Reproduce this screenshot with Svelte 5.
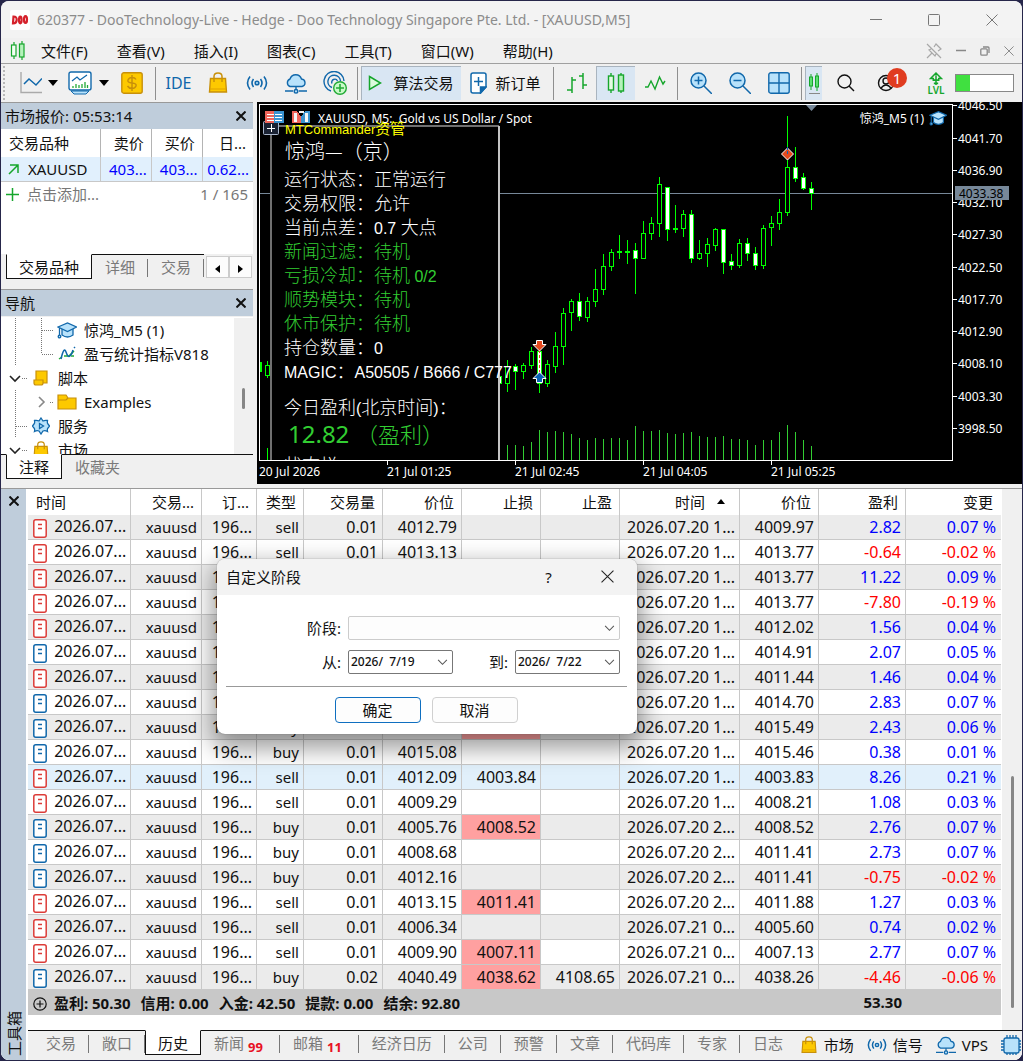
<script>
    const menus = ["文件(F)", "查看(V)", "插入(I)", "图表(C)", "工具(T)", "窗口(W)", "帮助(H)"];

    // type, lots, price, stop loss, take profit, close time, close price, profit, change
    const deals = [
        ["sell", "0.01", "4012.79", "", "", "2026.07.20 1...", "4009.97", "2.82", "0.07 %"],
        ["sell", "0.01", "4013.13", "", "", "2026.07.20 1...", "4013.77", "-0.64", "-0.02 %"],
        ["sell", "0.01", "", "", "", "2026.07.20 1...", "4013.77", "11.22", "0.09 %"],
        ["sell", "0.01", "", "", "", "2026.07.20 1...", "4013.77", "-7.80", "-0.19 %"],
        ["sell", "0.01", "", "", "", "2026.07.20 1...", "4012.02", "1.56", "0.04 %"],
        ["buy", "0.01", "", "", "", "2026.07.20 1...", "4014.91", "2.07", "0.05 %"],
        ["sell", "0.01", "", "", "", "2026.07.20 1...", "4011.44", "1.46", "0.04 %"],
        ["buy", "0.01", "", "", "", "2026.07.20 1...", "4014.70", "2.83", "0.07 %"],
        ["buy", "0.01", "", "4015.49", "", "2026.07.20 1...", "4015.49", "2.43", "0.06 %"],
        ["buy", "0.01", "4015.08", "", "", "2026.07.20 1...", "4015.46", "0.38", "0.01 %"],
        ["sell", "0.01", "4012.09", "4003.84", "", "2026.07.20 1...", "4003.83", "8.26", "0.21 %"],
        ["sell", "0.01", "4009.29", "", "", "2026.07.20 1...", "4008.21", "1.08", "0.03 %"],
        ["buy", "0.01", "4005.76", "4008.52", "", "2026.07.20 2...", "4008.52", "2.76", "0.07 %"],
        ["buy", "0.01", "4008.68", "", "", "2026.07.20 2...", "4011.41", "2.73", "0.07 %"],
        ["buy", "0.01", "4012.16", "", "", "2026.07.20 2...", "4011.41", "-0.75", "-0.02 %"],
        ["sell", "0.01", "4013.15", "4011.41", "", "2026.07.20 2...", "4011.88", "1.27", "0.03 %"],
        ["sell", "0.01", "4006.34", "", "", "2026.07.21 0...", "4005.60", "0.74", "0.02 %"],
        ["sell", "0.01", "4009.90", "4007.11", "", "2026.07.21 0...", "4007.13", "2.77", "0.07 %"],
        ["buy", "0.02", "4040.49", "4038.62", "4108.65", "2026.07.21 0...", "4038.26", "-4.46", "-0.06 %"],
    ];
    let selected = $state(10);

    const bottomTabs = [
        { label: "交易" },
        { label: "敞口" },
        { label: "历史" },
        { label: "新闻", count: 99 },
        { label: "邮箱", count: 11 },
        { label: "经济日历" },
        { label: "公司" },
        { label: "预警" },
        { label: "文章" },
        { label: "代码库" },
        { label: "专家" },
        { label: "日志" },
    ];
    let activeTab = $state("历史");

    // high, body top, body bottom, low, volume top; "f" is a falling (filled) bar
    const candles = [
        [360, 366, 384, 392, 445],
        [364, 366, 372, 390, 445, "f"],
        [363, 365, 372, 379, 446],
        [347, 351, 366, 369, 442],
        [350, 351, 384, 393, 430, "f"],
        [360, 364, 384, 387, 432],
        [332, 346, 367, 373, 431],
        [308, 313, 347, 365, 432],
        [299, 301, 313, 331, 434],
        [293, 301, 317, 321, 438, "f"],
        [297, 301, 318, 322, 440],
        [269, 289, 302, 307, 438],
        [254, 266, 290, 295, 439],
        [249, 252, 267, 271, 438],
        [235, 251, 252, 259, 438],
        [240, 251, 252, 264, 440],
        [243, 250, 259, 294, 426, "f"],
        [221, 233, 259, 259, 431],
        [217, 223, 234, 240, 431],
        [177, 184, 224, 237, 430],
        [187, 187, 230, 241, 433, "f"],
        [205, 228, 229, 233, 434],
        [210, 214, 229, 237, 433],
        [210, 214, 259, 263, 432, "f"],
        [240, 253, 259, 260, 436],
        [238, 244, 254, 267, 437],
        [228, 229, 246, 251, 437],
        [229, 229, 263, 274, 436, "f"],
        [254, 261, 266, 270, 439, "f"],
        [239, 243, 266, 268, 439],
        [238, 243, 254, 261, 440, "f"],
        [247, 253, 266, 270, 445, "f"],
        [225, 228, 266, 269, 440],
        [216, 223, 228, 246, 440],
        [199, 212, 224, 230, 432],
        [116, 167, 213, 216, 425],
        [147, 167, 179, 182, 432, "f"],
        [173, 177, 189, 190, 440, "f"],
        [182, 188, 194, 210, 446, "f"],
    ];
    const barX = (i) => 507 + i * 8;

    const prices = [
        [105, "4046.50"], [138, "4041.70"], [170, "4036.90"], [202, "4032.10"], [234, "4027.30"], [267, "4022.50"],
        [299, "4017.70"], [331, "4012.90"], [363, "4008.10"], [396, "4003.30"], [428, "3998.50"],
    ];
    const times = [[387, "21 Jul 01:25"], [515, "21 Jul 02:45"], [643, "21 Jul 04:05"], [771, "21 Jul 05:25"]];

    const status = [
        [186, "运行状态：", "正常运行", "", "w"],
        [210, "交易权限：", "允许", "", "w"],
        [258, "新闻过滤：", "待机", "", "g"],
        [282, "亏损冷却：", "待机", "0/2", "g"],
        [306, "顺势模块：", "待机", "", "g"],
        [330, "休市保护：", "待机", "", "g"],
        [354, "持仓数量：", "", "0", "w"],
    ];

    let dialogOpen = $state(true);
    let from = $state("2026/  7/19");
    let to = $state("2026/  7/22");
</script>

{#snippet bag(size)}
    <svg width={size} height={size} viewBox="0 0 22 22">
        <path d="M3.500 6.500h15l1 13.500h-17z" fill="#fdc900" stroke="#c8900a" stroke-width="1.400" />
        <path d="M7 10V4.500Q7 1 11 1t4 3.500V10" fill="none" stroke="#c8900a" stroke-width="1.500" />
        <path d="M3 17h16" stroke="#e0a400" stroke-width="1.200" />
    </svg>
{/snippet}

{#snippet signal(size)}
    <svg width={size} height={size} viewBox="0 0 22 22" fill="none" stroke="#1168ab" stroke-width="1.600">
        <circle cx="11" cy="11" r="1.800" fill="#b8e2fb" />
        <path d="M7.500 7q-3 4 0 8M14.500 7q3 4 0 8M4 4.500q-5 6.500 0 13M18 4.500q5 6.500 0 13" />
    </svg>
{/snippet}

{#snippet cloud(size)}
    <svg width={size} height={size} viewBox="0 0 22 22" stroke="#1168ab" stroke-width="1.400">
        <path d="M5 14.500a4 4 0 0 1 0-7.500 6 6 0 0 1 11.500 0 3.800 3.800 0 0 1 .5 7.500z" fill="#b8e2fb" />
        <path d="M11 14.500v4M0 19h8m6 0h8" fill="none" />
        <circle cx="11" cy="19.300" r="1.800" fill="#b8e2fb" />
    </svg>
{/snippet}

{#snippet cap(size)}
    <svg width={size} height={size} viewBox="0 0 20 20" fill="#b8e2fb" stroke="#1168ab" stroke-width="1.300">
        <path d="M5 9v6q5.500 4 11 0V9" />
        <path d="M1 7l9.500-4L19.500 7l-9 4.500z" />
        <path d="M2.500 8v8" fill="none" />
        <circle cx="2.500" cy="16.500" r="1.300" />
    </svg>
{/snippet}

{#snippet cross(size, color)}
    <svg width={size} height={size} viewBox="0 0 12 12" fill="none" stroke={color}>
        <path d="M.5.5l11 11m0-11l-11 11" />
    </svg>
{/snippet}

{#snippet closeBold()}
    <svg width="10" height="10" viewBox="0 0 10 10" fill="none" stroke="#111" stroke-width="2">
        <path d="M.5.5l9 9m0-9l-9 9" />
    </svg>
{/snippet}

{#snippet guide(kind)}
    <svg class="guide" width="26" height="24" viewBox="0 0 26 24" fill="none" stroke="#777" stroke-dasharray="1 1">
        {#if kind.includes("v")}<path d="M13.500 0v24" />{/if}
        {#if kind.includes("l") && kind !== "closed"}<path d="M13.500 0v12" />{/if}
        {#if kind.includes("r")}<path d="M14 12.500h12" />{/if}
        {#if kind === "open"}
            <path d="M20 12.500h6" />
            <path d="M8 10l5 5 5-5" stroke="#222" stroke-width="1.600" stroke-dasharray="none" />
        {/if}
        {#if kind === "closed"}
            <path d="M22 12.500h4" />
            <path d="M11 7l5 5-5 5" stroke="#888" stroke-width="1.600" stroke-dasharray="none" />
        {/if}
    </svg>
{/snippet}

{#snippet chevron()}
    <svg width="11" height="7" viewBox="0 0 12 8" fill="none" stroke="#555" stroke-width="1.200"><path d="M1 1l5 5 5-5" /></svg>
{/snippet}

<div class="desktop">
    <div class="window">
        <header class="titlebar">
            <svg class="logo" width="20" height="20" viewBox="0 0 20 20">
                <rect width="20" height="20" rx="2" fill="#fff" />
                <g fill="none" stroke="#d5212b" stroke-width="2.200">
                    <path d="M3.500 6.500l-.5 7q3.500 0 3.700-3.500T3.500 6.500z" />
                    <ellipse cx="10.300" cy="10" rx="1.300" ry="3.300" />
                    <ellipse cx="15.500" cy="9.500" rx="1.500" ry="3.500" />
                </g>
            </svg>
            <h1>620377 - DooTechnology-Live - Hedge - Doo Technology Singapore Pte. Ltd. - [XAUUSD,M5]</h1>
            <div class="winbuttons">
                <button aria-label="最小化"><svg width="12" height="12" viewBox="0 0 12 12"><path d="M0 5.500h12" stroke="#777" /></svg></button>
                <button aria-label="最大化">
                    <svg width="12" height="12" viewBox="0 0 12 12"><rect x=".5" y=".5" width="11" height="11" rx="1" fill="none" stroke="#777" /></svg>
                </button>
                <button aria-label="关闭">{@render cross(12, "#777")}</button>
            </div>
        </header>

        <nav class="menubar">
            <svg width="16" height="20" viewBox="0 0 16 20" stroke="#16a62c" stroke-width="1.200">
                <path d="M4 1v17M12 0v19" />
                <rect x="1.500" y="4" width="4.500" height="11" fill="#f4fff4" />
                <rect x="9.500" y="3" width="4.500" height="13" fill="#b5f2bb" />
            </svg>
            {#each menus as menu (menu)}
                <button>{menu}</button>
            {/each}
            <div class="mdi">
                <svg width="16" height="16" viewBox="0 0 16 16" fill="none" stroke="#a8a8a8" stroke-width="1.200">
                    <path d="M1 1l14 14M1 15l5-5M5 6L3 7l6 6 1-2M8 4l2-3 5 5-3 2" />
                </svg>
                <svg width="10" height="12" viewBox="0 0 10 12"><path d="M0 5.500h10" stroke="#888" stroke-width="1.500" /></svg>
                <svg width="10" height="10" viewBox="0 0 10 10" fill="none" stroke="#888" stroke-width="1.300">
                    <rect x=".8" y="2.800" width="6.400" height="6.400" rx="1" /><path d="M3 1h5q1 0 1 1v5" />
                </svg>
                {@render cross(10, "#777")}
            </div>
        </nav>

        <div class="toolbar">
            <span class="grip"></span>
            <button class="first" aria-label="图表">
                <svg width="22" height="22" viewBox="0 0 22 22" fill="none">
                    <path d="M1 0v20.500h21" stroke="#aaa" stroke-width="1.400" />
                    <path d="M4 12l5-5 7 6 6-6.500" stroke="#1168ab" stroke-width="1.500" />
                </svg>
            </button>
            <svg class="caret" width="10" height="6" viewBox="0 0 10 6"><path d="M0 0h10L5 6z" /></svg>
            <button aria-label="模板">
                <svg width="24" height="24" viewBox="0 0 24 24" fill="none">
                    <rect x="1" y="1" width="22" height="18" rx="2" fill="#fff" stroke="#1168ab" stroke-width="1.400" />
                    <path d="M3 20h18l-3 3H6z" fill="#b8e2fb" stroke="#1168ab" />
                    <path d="M4 10l5-4 3 3 7-5" stroke="#1168ab" stroke-width="1.300" />
                    <path d="M5 17v-2m3 2v-4m3 4v-3m3 3v-4m3 4v-6m2.500 6v-3" stroke="#22aa35" stroke-width="1.300" />
                </svg>
            </button>
            <svg class="caret" width="10" height="6" viewBox="0 0 10 6"><path d="M0 0h10L5 6z" /></svg>
            <button class="wide" aria-label="资金">
                <svg width="22" height="22" viewBox="0 0 22 22" fill="none" stroke="#c8900a">
                    <rect x=".8" y=".8" width="20.400" height="20.400" rx="2" fill="#fdc900" stroke-width="1.400" />
                    <path d="M15 7.500Q14 5.500 11 5.500T7 8t4 3 4 3-4 2.500-4.500-2.500M11 3v16" stroke-width="1.500" />
                </svg>
            </button>
            <i class="sep"></i>
            <button class="ide">IDE</button>
            <button aria-label="市场">{@render bag(22)}</button>
            <button aria-label="信号">{@render signal(22)}</button>
            <button aria-label="VPS">{@render cloud(22)}</button>
            <button aria-label="直播">
                <svg width="24" height="24" viewBox="0 0 24 24" fill="none" stroke="#1168ab" stroke-width="1.400">
                    <path d="M8 20A10 10 0 1 1 21 10M9 16.500a6.300 6.300 0 1 1 8.500-6.500M9 12.500a3 3 0 1 1 5.500-2.500" />
                    <circle cx="17" cy="17" r="6.300" fill="#c9fac8" stroke="#22aa35" />
                    <path d="M17 13v8m-4-4h8" stroke="#22aa35" stroke-width="1.600" />
                </svg>
            </button>
            <i class="sep"></i>
            <button class="algo on">
                <svg width="14" height="16" viewBox="0 0 14 16"><path d="M1.500 1.500l11 6.500-11 6.500z" fill="#dcfbdc" stroke="#16a62c" stroke-width="1.500" /></svg>
                算法交易
            </button>
            <button class="order">
                <svg width="17" height="22" viewBox="0 0 17 22" stroke="#1168ab" stroke-width="1.500">
                    <path d="M3 1h11q2 0 2 2v12l-5.500 6H3q-2 0-2-2V3q0-2 2-2z" fill="#fff" />
                    <path d="M16 15h-5.500v6z" fill="#1168ab" /><path d="M8.500 5v9M4 9.500h9" />
                </svg>
                新订单
            </button>
            <i class="sep"></i>
            <button aria-label="柱形图">
                <svg width="22" height="22" viewBox="0 0 22 22" fill="none" stroke="#16a62c" stroke-width="1.500">
                    <path d="M6 5v16M1 18h5m0-10h4M17 1v16M13 4h4m0 9h4" />
                </svg>
            </button>
            <button class="on" aria-label="蜡烛图">
                <svg width="22" height="22" viewBox="0 0 22 22" stroke="#16a62c" stroke-width="1.400">
                    <path d="M6 1v20M16 1v20" /><rect x="3.500" y="4" width="5" height="14" fill="#e4fbe4" /><rect x="13.500" y="3" width="5" height="16" fill="#b5f2bb" />
                </svg>
            </button>
            <button aria-label="线形图">
                <svg width="22" height="22" viewBox="0 0 22 22" fill="none" stroke="#16a62c" stroke-width="1.400"><path d="M1 15h3l3-6 4 8 4.500-12L19 12l2-3" /></svg>
            </button>
            <i class="sep"></i>
            <button aria-label="放大">
                <svg width="22" height="22" viewBox="0 0 22 22" fill="none" stroke="#1168ab" stroke-width="1.500">
                    <circle cx="8.500" cy="8.500" r="7.500" fill="#b8e2fb" /><path d="M14 14l8 8M8.500 4.500v8m-4-4h8" />
                </svg>
            </button>
            <button aria-label="缩小">
                <svg width="22" height="22" viewBox="0 0 22 22" fill="none" stroke="#1168ab" stroke-width="1.500">
                    <circle cx="8.500" cy="8.500" r="7.500" fill="#b8e2fb" /><path d="M14 14l8 8M4.500 8.500h8" />
                </svg>
            </button>
            <button aria-label="平铺">
                <svg width="22" height="22" viewBox="0 0 22 22" stroke="#1168ab" stroke-width="1.400">
                    <rect x=".8" y=".8" width="20.400" height="20.400" rx="2" fill="#b8e2fb" /><path d="M11 1v20M1 11h20" />
                </svg>
            </button>
            <i class="sep"></i>
            <button class="on cut" aria-label="更多">
                <svg width="12" height="22" viewBox="0 0 12 22" stroke="#16a62c">
                    <path d="M3 2v16M9 1v18" /><rect x="1.500" y="5" width="3" height="9" fill="#5be070" /><rect x="7.500" y="4" width="3" height="11" fill="#5be070" /><path d="M1 21.500h11" stroke="#888" />
                </svg>
            </button>
            <button class="search" aria-label="搜索">
                <svg width="18" height="18" viewBox="0 0 18 18" fill="none" stroke="#111" stroke-width="1.400"><circle cx="7.500" cy="7.500" r="6.500" /><path d="M12 12l5 5" /></svg>
            </button>
            <button class="account" aria-label="账户">
                <svg width="18" height="18" viewBox="0 0 18 18" fill="none" stroke="#111" stroke-width="1.400">
                    <circle cx="9" cy="9" r="7.500" /><circle cx="9" cy="7" r="3" /><path d="M4 14q5-6 10 0" />
                </svg>
                <span class="badge">1</span>
            </button>
            <button class="lvl">
                <svg width="14" height="13" viewBox="0 0 12 12" fill="none" stroke="#16a62c" stroke-width="1.400"><path d="M6 1L1 6h2.500v1.500h5V6H11zM6 3v9M4 10.500h4" /></svg>
                LVL
            </button>
            <div class="meter"><span></span></div>
        </div>

        <div class="middle">
            <aside>
                <section class="panel">
                    <header><h2>市场报价: 05:53:14</h2><button aria-label="关闭市场报价">{@render closeBold()}</button></header>
                    <div class="market">
                        <table class="quotes">
                            <thead><tr><th>交易品种</th><th>卖价</th><th>买价</th><th>日...</th></tr></thead>
                            <tbody>
                                <tr>
                                    <td>
                                        <svg width="11" height="11" viewBox="0 0 11 11" fill="none" stroke="#16a62c" stroke-width="1.500"><path d="M1 10l9-9M2 1h8v8" /></svg>
                                        XAUUSD
                                    </td>
                                    <td>403...</td><td>403...</td><td>0.62...</td>
                                </tr>
                            </tbody>
                        </table>
                        <div class="add">
                            <svg width="13" height="13" viewBox="0 0 13 13" stroke="#16a62c" stroke-width="1.500"><path d="M6.500 0v13M0 6.500h13" /></svg>
                            <span>点击添加...</span><span class="total">1 / 165</span>
                        </div>
                    </div>
                    <div class="tabs">
                        <button class="active">交易品种</button><button>详细</button><button>交易</button>
                        <div class="arrows"><button aria-label="向左"><svg width="5" height="8" viewBox="0 0 5 8"><path d="M5 0v8L0 4z" /></svg></button><button aria-label="向右"><svg width="5" height="8" viewBox="0 0 5 8"><path d="M0 0v8l5-4z" /></svg></button></div>
                    </div>
                </section>

                <section class="panel">
                    <header><h2>导航</h2><button aria-label="关闭导航">{@render closeBold()}</button></header>
                    <div class="tree">
                        <ul>
                            <li>{@render guide("v")}{@render guide("vr")}<i>{@render cap(20)}</i>惊鸿_M5 (1)</li>
                            <li>
                                {@render guide("v")}{@render guide("lr")}
                                <i>
                                    <svg width="18" height="16" viewBox="0 0 18 16" fill="none" stroke-width="1.500">
                                        <path d="M1 13l3-2M6 10l5 0 5-5M13 10h3" stroke="#22aa35" /><path d="M3 13Q6 0 8 6t4 4 3-6M16 2l1-1" stroke="#1168ab" />
                                    </svg>
                                </i>盈亏统计指标V818
                            </li>
                            <li>
                                {@render guide("open")}
                                <i>
                                    <svg width="16" height="16" viewBox="0 0 16 16" fill="#fdc900" stroke="#c8900a" stroke-width="1.200"><path d="M5 1h9v12H3V1z" /><path d="M1 10h9v3q0 2-2 2H3q-2 0-2-2z" /></svg>
                                </i>脚本
                            </li>
                            <li>
                                {@render guide("v")}{@render guide("closed")}
                                <i>
                                    <svg width="20" height="16" viewBox="0 0 20 16" fill="#fdc900" stroke="#c8900a" stroke-width="1.200"><path d="M1 1h8l2 3h8v11H1z" /><path d="M1 6h8l2-2" fill="none" /></svg>
                                </i>Examples
                            </li>
                            <li>
                                {@render guide("vr")}
                                <i>
                                    <svg width="18" height="18" viewBox="0 0 18 18" fill="#b8e2fb" stroke="#1168ab" stroke-width="1.300"><path d="M9 1l2 3q2-1 4.500-.5Q15 6 16 7l1.500 2-1.500 2q-1 1-.5 3.500Q13 13 11 14l-2 3-2-3q-2-1-4.500.5Q3 12 2 11L.5 9 2 7q1-1 .5-3.500Q5 3 7 4z" /><path d="M7.500 6.500l4 2.500-4 2.500z" /></svg>
                                </i>服务
                            </li>
                            <li>{@render guide("open")}<i>{@render bag(18)}</i>市场</li>
                        </ul>
                        <div class="track"><span></span></div>
                    </div>
                    <div class="tabs nav"><button class="active">注释</button><button>收藏夹</button></div>
                </section>
            </aside>

            <main>
                <svg class="chart" viewBox="257 102 765 382">
                    <g fill="none" stroke="#fff" shape-rendering="crispEdges">
                        <path d="M952.500 104V460.500H259.500V104.500H952" />
                        {#each prices as [y, label] (label)}<path d="M953 {y}.500h4" />{/each}
                        {#each times as [x, label] (label)}<path d="M{x}.500 461v4" />{/each}
                    </g>
                    <path d="M260 193.500h692" stroke="#778899" shape-rendering="crispEdges" />
                    <path d="M806 105h11l-5.500 6z" fill="#778899" />

                    {#each prices as [y, label] (label)}<text class="axis" x="958" y={y + 5}>{label}</text>{/each}
                    <rect x="955" y="186" width="54" height="14" fill="#778899" />
                    <text class="axis dark" x="959" y="198">4033.38</text>
                    <text class="axis" x="259" y="476">20 Jul 2026</text>
                    {#each times as [x, label] (label)}<text class="axis" {x} y="476">{label}</text>{/each}

                    <g stroke="#00ff00" fill="#000" shape-rendering="crispEdges">
                        <path d="M267.500 361v17M267.500 448v12" />
                        <rect x="265.500" y="365.500" width="4" height="10" />
                        <rect x="260.500" y="362.500" width="1" height="9" fill="#fff" />
                        <rect x="497.500" y="376.500" width="4" height="7" fill="#fff" />
                        {#each candles as [high, top, bottom, low, volume, fall], i}
                            <path d="M{barX(i)}.500 {high}V{low}" />
                            <rect x={barX(i) - 1.5} y={top + 0.5} width="4" height={Math.max(bottom - top - 1, 1)} fill={fall ? "#fff" : "#000"} />
                            <path d="M{barX(i)}.500 {volume}V460" stroke="#32cd32" />
                        {/each}
                    </g>
                    <path d="M539.500 350v28" stroke="#e34a1f" stroke-dasharray="3 2" />

                    <!-- deal arrows -->
                    <g stroke="#fff">
                        <path d="M536.500 340.500h6v4h3.500l-6.500 6.500-6.500-6.500h3.500z" fill="#e34a1f" />
                        <path d="M536.500 382.500h6v-4h3.500l-6.500-6.500-6.500 6.500h3.500z" fill="#0a63b4" />
                        <path d="M781.500 154l6-6 6 6-6 6z" fill="#e34a1f" />
                        <path d="M787.500 147v8" stroke="#0a63b4" stroke-dasharray="3 1" />
                    </g>

                    <!-- expert advisor status board -->
                    <path d="M271 125h228v335H271z" fill="#000" />
                    <path d="M271 460V126h228" fill="none" stroke="#707070" stroke-width="2" />
                    <path d="M499 126v334" stroke="#c4c4c4" stroke-width="2" />
                    <rect x="263.500" y="121.500" width="15" height="13" rx="1" fill="#1a2233" stroke="#a9b6cc" />
                    <path d="M267 128.500h8M271.500 124v8" stroke="#fff" />
                    <g shape-rendering="crispEdges">
                        <path d="M265 111h9v12h-9z" fill="#f0655a" /><path d="M274 111h10v12h-10z" fill="#3a93d0" />
                        <path d="M267 114.500h7M267 117.500h7M267 120.500h7M275 114.500h7M275 117.500h7M275 120.500h7" stroke="#fff" />
                        <path d="M292 111h5l4 6v6h-9z" fill="#f0655a" /><path d="M310 111h-5l-4 6v6h9z" fill="#3a93d0" />
                        <path d="M294 113h3v9h-3zM305 113h3v9h-3zM299 111h5v2h-5z" fill="#f4f4f4" />
                    </g>
                    <text class="axis" x="318" y="123" xml:space="preserve">XAUUSD, M5:  Gold vs US Dollar / Spot</text>
                    <text class="axis" x="924" y="123" text-anchor="end">惊鸿_M5 (1)</text>
                    <g transform="translate(929 109)">{@render cap(18)}</g>

                    <text class="brand" x="285" y="134">MTCommander<tspan class="big">资管</tspan></text>
                    <text class="name w" x="285" y="159">惊鸿—（京）</text>
                    {#each status as [y, label, state, value, tone] (label)}
                        <text class="board {tone}" x="284" {y}>{label}{state}<tspan class="latin">{state ? "\u00a0" : ""}{value}</tspan></text>
                    {/each}
                    <text class="board w" x="284" y="234">当前点差：<tspan class="latin">{"0.7\u00a0"}</tspan>大点</text>
                    <text class="board w" x="284" y="378"><tspan class="latin">MAGIC</tspan>：<tspan class="latin">A50505 / B666 / C777</tspan></text>
                    <text class="board w" x="284" y="414">今日盈利<tspan class="latin">(</tspan>北京时间<tspan class="latin">)</tspan>：</text>
                    <text class="profit" x="288" y="443">12.82</text>
                    <text class="name wide g" x="356" y="443">（盈利）</text>
                    <svg x="284" y="454" width="60" height="6" viewBox="284 454 60 6"><text class="board w" x="284" y="472">状态栏</text></svg>
                </svg>
            </main>
        </div>

        <section class="toolbox">
            <div class="strip"><button aria-label="关闭工具箱">{@render closeBold()}</button><span>工具箱</span></div>
            <div class="history">
                <div class="scroll">
                    <div class="rows">
                        <table class="deals">
                            <colgroup>
                                <col class="c-time" /><col class="c-symbol" /><col class="c-ticket" /><col class="c-type" />
                                <col class="c-num" /><col class="c-num" /><col class="c-num" /><col class="c-num" />
                                <col class="c-close" /><col class="c-num" /><col class="c-profit" /><col />
                            </colgroup>
                            <thead>
                                <tr>
                                    <th class="left">时间</th><th>交易...</th><th>订...</th><th>类型</th><th>交易量</th><th>价位</th><th>止损</th><th>止盈</th>
                                    <th class="sorted">时间 <svg width="8" height="5" viewBox="0 0 8 5"><path d="M0 5h8L4 0z" /></svg></th>
                                    <th>价位</th><th>盈利</th><th>变更</th>
                                </tr>
                            </thead>
                            <tbody>
                                {#each deals as [type, lots, price, sl, tp, closed, closePrice, profit, change], i}
                                    <tr class:selected={i === selected} onclick={() => (selected = i)}>
                                        <td class="left">
                                            <svg class={type} width="14" height="19" viewBox="0 0 14 19">
                                                <rect x=".8" y=".8" width="12.400" height="17.400" rx="2" fill="#fff" stroke="currentColor" stroke-width="1.500" />
                                                <path d="M5 5.500h4m-4 4h4" stroke="currentColor" stroke-width="1.300" />
                                            </svg>
                                            2026.07...
                                        </td>
                                        <td class="word">xauusd</td><td>196...</td><td class="word">{type}</td><td>{lots}</td><td>{price}</td>
                                        <td class:hit={sl && i !== 10}>{sl}</td><td>{tp}</td><td>{closed}</td><td>{closePrice}</td>
                                        <td class={profit.startsWith("-") ? "loss" : "gain"}>{profit}</td>
                                        <td class={profit.startsWith("-") ? "loss" : "gain"}>{change}</td>
                                    </tr>
                                {/each}
                            </tbody>
                            <tfoot>
                                <tr>
                                    <td class="left" colspan="10">
                                        <svg width="14" height="14" viewBox="0 0 14 14" fill="none" stroke="#111" stroke-width="1.200"><circle cx="7" cy="7" r="6.200" /><path d="M7 3.500v7M3.500 7h7" /></svg>
                                        <span>盈利: 50.30</span><span>信用: 0.00</span><span>入金: 42.50</span><span>提款: 0.00</span><span>结余: 92.80</span>
                                    </td>
                                    <td>53.30</td><td></td>
                                </tr>
                            </tfoot>
                        </table>
                    </div>
                    <div class="track"><span></span></div>
                </div>
                <div class="bottom">
                    <div class="tabs">
                        {#each bottomTabs as tab (tab.label)}
                            <button class:active={tab.label === activeTab} onclick={() => (activeTab = tab.label)}>{tab.label}{#if tab.count}<b>{tab.count}</b>{/if}</button>
                        {/each}
                    </div>
                    <div class="services">
                        <a href="#market">{@render bag(18)}市场</a>
                        <a href="#signals">{@render signal(20)}信号</a>
                        <a href="#vps">{@render cloud(20)}VPS</a>
                        <svg width="20" height="20" viewBox="0 0 20 20" fill="#b8e2fb" stroke="#1168ab" stroke-width="1.300">
                            <path d="M6 0v20M9 0v20M12 0v20M15 0v20M0 6h20M0 9h20M0 12h20M0 15h20" /><rect x="3" y="3" width="15" height="15" rx="2" />
                        </svg>
                    </div>
                </div>
            </div>
        </section>

        {#if dialogOpen}
            <form class="dialog" onsubmit={(e) => e.preventDefault()}>
                <header>
                    <h2>自定义阶段</h2>
                    <button type="button">?</button>
                    <button type="button" aria-label="关闭" onclick={() => (dialogOpen = false)}>{@render cross(13, "#222")}</button>
                </header>
                <div class="fields">
                    <label for="period">阶段:</label>
                    <div class="field period"><select id="period"><option></option></select>{@render chevron()}</div>
                    <label for="from">从:</label>
                    <div class="field"><input id="from" bind:value={from} />{@render chevron()}</div>
                    <label for="to">到:</label>
                    <div class="field"><input id="to" bind:value={to} />{@render chevron()}</div>
                </div>
                <footer>
                    <button class="ok">确定</button>
                    <button type="button" onclick={() => (dialogOpen = false)}>取消</button>
                </footer>
            </form>
        {/if}
    </div>
</div>

<style>
    :global(body) {
        background: #26264a;
    }
    .desktop {
        box-sizing: border-box;
        min-height: 100vh;
        padding: 1px;
        display: flex;
        background: #26264a;
        font: 15px/20px "Noto Sans", "Noto Sans CJK SC", sans-serif;
        color: #111;
    }
    .window {
        position: relative;
        flex: 1;
        min-width: 0;
        display: flex;
        flex-direction: column;
        background: #f0f0f0;
        border-radius: 8px;
        overflow: hidden;
    }
    button,
    input,
    select {
        font: inherit;
        color: inherit;
        background: none;
        border: 0;
        margin: 0;
        padding: 0;
    }
    svg {
        flex-shrink: 0;
    }
    h1,
    h2 {
        margin: 0;
        font: inherit;
    }
    ul {
        list-style: none;
        margin: 0;
        padding: 0;
    }

    .titlebar {
        display: flex;
        align-items: center;
        height: 37px;
        padding-left: 9px;
        background: #f3f3f3;
        color: #8c8c8c;
    }
    .titlebar h1 {
        margin-left: 7px;
        font-size: 14px;
        white-space: nowrap;
    }
    .winbuttons {
        display: flex;
        margin-left: auto;
        padding-right: 1px;
    }
    .winbuttons button {
        width: 58px;
    }
    .menubar {
        display: flex;
        align-items: center;
        height: 25px;
        padding-left: 9px;
        border-bottom: 1px solid #a0a0a0;
    }
    .menubar > button {
        padding: 0 15px 0 14px;
        white-space: nowrap;
    }
    .menubar > svg + button {
        margin-left: 1px;
    }
    .mdi {
        display: flex;
        align-items: center;
        gap: 14px;
        margin-left: auto;
        padding-right: 8px;
    }

    .toolbar {
        display: flex;
        align-items: center;
        height: 38px;
        padding-left: 2px;
    }
    .toolbar button {
        display: flex;
        align-items: center;
        justify-content: center;
        width: 39px;
        height: 34px;
        flex-shrink: 0;
        white-space: nowrap;
    }
    .grip {
        width: 2px;
        height: 34px;
        margin-right: 6px;
        border-left: 2px dotted #b8b8b8;
    }
    .toolbar button.wide {
        width: 41px;
    }
    .toolbar button.first {
        width: 35px;
    }
    .toolbar .ide {
        font-size: 16px;
        color: #1168ab;
    }
    .caret {
        margin-right: 2px;
    }
    .sep {
        width: 1px;
        height: 33px;
        margin: 0 3px;
        background: #8f8f8f;
    }
    .toolbar .on {
        background: #d9e6f3;
        box-shadow: inset 1px 1px #a9b4bf;
    }
    .toolbar .algo {
        width: 100px;
        gap: 11px;
    }
    .toolbar .order {
        width: 89px;
        gap: 8px;
    }
    .toolbar .cut {
        width: 17px;
    }
    .toolbar .search {
        width: 48px;
    }
    .toolbar .account {
        position: relative;
        width: 32px;
    }
    .badge {
        position: absolute;
        top: 2px;
        left: 17px;
        width: 20px;
        height: 20px;
        border-radius: 50%;
        background: #e03c20;
        color: #fff;
        line-height: 20px;
    }
    .toolbar .lvl {
        flex-direction: column;
        width: 32px;
        margin-left: auto;
        color: #16a62c;
        font-size: 10px;
        line-height: 10px;
        font-weight: 600;
    }
    .meter {
        width: 57px;
        height: 16px;
        margin: 0 8px 0 3px;
        border: 1px solid #888;
        background: #fff;
    }
    .meter span {
        display: block;
        width: 14px;
        height: 16px;
        background: #40e040;
    }

    .middle {
        display: grid;
        grid-template-columns: 252px minmax(0, 1fr);
        column-gap: 4px;
    }
    aside {
        display: flex;
        flex-direction: column;
        gap: 9px;
    }
    .panel > header {
        display: flex;
        align-items: center;
        justify-content: space-between;
        height: 26px;
        padding: 0 7px 0 4px;
        border-top: 1px solid #999;
        background: #bfcddb;
    }
    .panel > header button {
        display: flex;
    }
    .market {
        height: 125px;
        background: #fff;
    }
    .quotes {
        width: 100%;
        table-layout: fixed;
        border-collapse: collapse;
        text-align: right;
    }
    .quotes th {
        height: 28px;
        padding: 0 7px 0 0;
        font-weight: 400;
        border-right: 1px solid #b4b4b4;
    }
    .quotes td {
        height: 24px;
        padding: 0 4px 0 0;
        background: #e1f0fd;
        color: #00f;
        border-right: 1px solid #c8c8c8;
        border-bottom: 1px solid #c8c8c8;
    }
    .quotes th:last-child,
    .quotes td:last-child {
        border-right: 0;
    }
    .quotes th:first-child {
        width: 84px;
        padding-left: 8px;
        text-align: left;
    }
    .quotes td:first-child {
        text-align: left;
        padding: 0 0 0 7px;
        color: #111;
        white-space: nowrap;
    }
    .quotes td svg {
        margin-right: 5px;
    }
    .add {
        display: flex;
        align-items: center;
        gap: 8px;
        padding: 2px 5px;
        color: #777;
    }
    .total {
        margin-left: auto;
    }
    .tabs {
        display: flex;
        align-items: flex-start;
        height: 26px;
        padding-left: 5px;
        color: #7a7a7a;
    }
    .tabs button {
        position: relative;
        height: 25px;
        padding: 0 13px;
        white-space: nowrap;
        border-top: 1px solid #111;
    }
    .tabs button::after {
        content: "";
        position: absolute;
        right: 0;
        top: 4px;
        height: 18px;
        border-right: 1px solid #777;
    }
    .tabs button.active {
        padding: 0 12px;
        background: #fff;
        color: #111;
        border: 1px solid #111;
        border-top-color: #fff;
    }
    .tabs button.active::after,
    .tabs.nav button::after,
    .bottom .tabs button:last-child::after {
        content: none;
    }
    .arrows {
        display: flex;
        margin: 2px 1px 0 auto;
    }
    .tabs .arrows button {
        width: 23px;
        height: 22px;
        padding: 0;
        line-height: 10px;
        border: 1px solid #ccc;
        background: #fcfcfc;
    }
    .tabs .arrows button::after {
        content: none;
    }
    .tree {
        display: flex;
        height: 136px;
        margin-top: 1px;
        padding-top: 1px;
        overflow: hidden;
        background: #fff;
    }
    .tree ul {
        flex: 1;
    }
    .tree li {
        display: flex;
        align-items: center;
        height: 24px;
        padding-left: 1px;
        white-space: nowrap;
    }
    .tree i {
        display: flex;
        justify-content: center;
        width: 26px;
        margin-right: 4px;
    }
    .tree .track {
        width: 19px;
        padding-top: 70px;
        background: #f0f0f0;
    }
    .track span {
        display: block;
        width: 3px;
        height: 21px;
        margin: 0 auto;
        border-radius: 2px;
        background: #868686;
    }
    .tabs.nav {
        height: 29px;
        border-top: 1px solid #111;
    }
    .tabs.nav button {
        margin-top: -1px;
        height: 25px;
    }
    .tabs.nav button + button {
        border-top-color: transparent;
    }

    main {
        background: #000;
    }
    .chart {
        display: block;
        width: 100%;
    }
    .axis {
        font-size: 12px;
        fill: #fff;
    }
    .dark {
        fill: #000;
    }
    .brand {
        font: 13px "Liberation Sans", "Noto Sans CJK SC", sans-serif;
        fill: #ff0;
    }
    .big {
        font-size: 15px;
    }
    .board {
        font: 18px "Noto Sans CJK SC", sans-serif;
        font-weight: 300;
    }
    .latin {
        font: 16px "Liberation Sans", sans-serif;
        white-space: pre;
    }
    .name {
        font: 20px "Noto Sans CJK SC", sans-serif;
        font-weight: 300;
    }
    .name.wide {
        font-size: 22px;
    }
    .profit {
        font-size: 24px;
        fill: #32cd32;
    }
    .w {
        fill: #fff;
    }
    .g {
        fill: #32cd32;
    }

    .toolbox {
        flex: 1;
        display: grid;
        grid-template-columns: 25px minmax(0, 1fr);
        column-gap: 2px;
        margin-top: 4px;
        border-top: 1px solid #999;
        background: #fff;
    }
    .strip {
        display: flex;
        flex-direction: column;
        align-items: center;
        justify-content: space-between;
        padding: 7px 0 4px;
        background: #bfcddb;
    }
    .strip button {
        display: flex;
    }
    .strip span {
        writing-mode: vertical-rl;
        text-orientation: sideways;
        transform: rotate(180deg);
    }
    .history {
        display: flex;
        flex-direction: column;
    }
    .scroll {
        flex: 1;
        display: flex;
    }
    .rows {
        flex: 1;
    }
    .scroll .track {
        width: 20px;
        display: flex;
        align-items: flex-end;
        padding-bottom: 22px;
        margin-left: 1px;
        box-sizing: border-box;
        background: #f0f0f0;
    }
    .scroll .track span {
        height: 232px;
    }
    .deals {
        width: 100%;
        table-layout: fixed;
        border-collapse: separate;
        border-spacing: 0;
        font-size: 16px;
        text-align: right;
        white-space: nowrap;
    }
    .c-time { width: 103px; }
    .c-symbol { width: 71px; }
    .c-ticket { width: 55px; }
    .c-type { width: 47px; }
    .c-num { width: 79px; }
    .c-close { width: 120px; }
    .c-profit { width: 87px; }
    .deals th,
    .deals td {
        box-sizing: border-box;
        height: 25px;
        padding: 0 4px 1px;
        border-right: 1px solid #c8c8c8;
        border-bottom: 1px solid #c8c8c8;
    }
    .deals th {
        height: 26px;
        padding-right: 7px;
        border-bottom: 0;
        font-size: 15px;
        font-weight: 400;
    }
    .deals th:last-child,
    .deals td:last-child {
        border-right: 0;
        padding-right: 5px;
    }
    .deals th:last-child {
        padding-right: 8px;
    }
    .deals .left {
        text-align: left;
        padding: 0 0 0 5px;
    }
    .deals th.left {
        padding: 0 0 1px 8px;
    }
    .sorted svg {
        margin: 0 7px 4px 8px;
    }
    .deals tbody tr:nth-child(odd) {
        background: #ebebeb;
    }
    .deals tbody tr.selected {
        background: #e1f0fb;
    }
    .deals .left svg {
        margin-right: 3px;
        vertical-align: middle;
    }
    .deals .word {
        font-size: 15px;
    }
    .deals .hit {
        background: #ffa0a0;
    }
    .sell {
        color: #dc3c38;
    }
    .buy {
        color: #1168ab;
    }
    .gain {
        color: #00f;
    }
    .loss {
        color: #f00;
    }
    .deals tfoot td {
        border: 0;
        background: #c8c8c8;
        font-size: 15px;
        font-weight: 700;
    }
    .deals tfoot span {
        margin-right: 10px;
    }
    .bottom {
        display: flex;
        align-items: flex-start;
        height: 29px;
        border-top: 1px solid #111;
        background: #f0f0f0;
    }
    .bottom .tabs button {
        margin-top: -1px;
        border-top-color: transparent;
    }
    .bottom .tabs button.active {
        border-top-color: #fff;
    }
    .bottom b {
        margin: 0 0 0 4px;
        padding-right: 4px;
        color: #e81123;
        font-size: 13px;
        line-height: 10px;
        vertical-align: -3px;
    }
    .services {
        display: flex;
        align-items: center;
        gap: 13px;
        height: 28px;
        margin-left: auto;
        padding-right: 1px;
    }
    .services a {
        display: flex;
        align-items: center;
        gap: 6px;
        color: inherit;
        text-decoration: none;
        white-space: nowrap;
    }

    .dialog {
        position: absolute;
        left: 216px;
        top: 558px;
        width: 420px;
        border-radius: 8px;
        background: #fff;
        box-shadow: 0 0 1px #555, 0 10px 24px 4px rgba(0, 0, 0, 0.4);
        overflow: hidden;
    }
    .dialog > header {
        display: flex;
        align-items: center;
        height: 36px;
        padding-left: 9px;
        background: #f3f3f3;
    }
    .dialog h2 {
        flex: 1;
    }
    .dialog > header button {
        width: 59px;
    }
    .fields {
        display: grid;
        grid-template-columns: 117px 105px 52px 105px;
        column-gap: 5px;
        row-gap: 10px;
        align-items: center;
        margin: 0 10px 0 9px;
        padding: 21px 0 12px;
        border-bottom: 1px solid #999;
    }
    .fields label {
        text-align: right;
        padding-right: 2px;
    }
    .field {
        display: flex;
        align-items: center;
        box-sizing: border-box;
        height: 24px;
        padding-right: 4px;
        border: 1px solid #777;
        border-radius: 2px;
    }
    .period {
        grid-column: span 3;
        border-color: #ccc;
        background: #fdfdfd;
    }
    .field input,
    .field select {
        flex: 1;
        min-width: 0;
        padding-left: 2px;
        appearance: none;
        font-size: 12px;
        font-weight: 500;
        white-space: pre;
    }
    .dialog footer {
        display: flex;
        justify-content: center;
        gap: 11px;
        padding: 10px 2px 11px 0;
    }
    .dialog footer button {
        box-sizing: border-box;
        width: 86px;
        height: 26px;
        border: 1px solid #d0d0d0;
        border-radius: 4px;
        background: #fdfdfd;
    }
    .dialog footer .ok {
        border-color: #0f6fc0;
    }
</style>
